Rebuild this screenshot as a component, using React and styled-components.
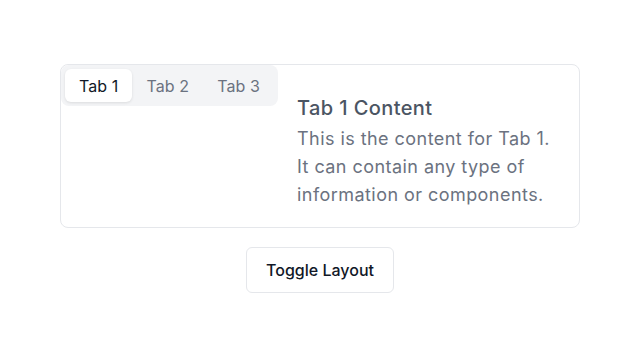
import React, { useState } from 'react'
import styled, { createGlobalStyle } from 'styled-components'

const GlobalStyle = createGlobalStyle`
    html, body {
        margin: 0;
        padding: 0;
        background: #ffffff;
        font-family: Inter, "Noto Sans", sans-serif;
    }
`
const Page = styled.div`
    display: flex;
    flex-direction: column;
    align-items: center;
    justify-content: center;
    gap: 19px;
    height: 357px;
`
const Card = styled.div`
    display: flex;
    flex-direction: ${props => (props.vertical ? 'column' : 'row')};
    align-items: flex-start;
    width: 520px;
    box-sizing: border-box;
    border: 1px solid #e5e7eb;
    border-radius: 8px;
    background: #ffffff;
`
const TabList = styled.div`
    display: flex;
    flex-shrink: 0;
    padding: 4px;
    background: #f3f4f6;
    border-radius: 8px;
`
const TabButton = styled.button`
    font-family: inherit;
    font-size: 16px;
    letter-spacing: 0.1px;
    white-space: nowrap;
    height: 33px;
    padding: 0 14px;
    border: none;
    border-radius: 6px;
    cursor: pointer;
    color: ${props => (props.active ? '#111827' : '#6b7280')};
    background: ${props => (props.active ? '#ffffff' : 'transparent')};
    box-shadow: ${props => (props.active ? '0 1px 3px rgba(0,0,0,0.1)' : 'none')};
`
const Panel = styled.div`
    padding: 29px 20px 18px 19px;
`
const Title = styled.h3`
    margin: 0 0 3px;
    font-size: 20px;
    font-weight: 500;
    letter-spacing: 0.4px;
    line-height: 28px;
    color: #4b5563;
`
const Body = styled.p`
    margin: 0;
    width: 262px;
    font-size: 18px;
    letter-spacing: 0.45px;
    line-height: 28px;
    color: #6b7280;
`
const ToggleButton = styled.button`
    font-family: inherit;
    font-size: 16px;
    font-weight: 500;
    color: #111827;
    background: #ffffff;
    width: 148px;
    height: 46px;
    border: 1px solid #e5e7eb;
    border-radius: 6px;
    cursor: pointer;
`

const tabs = [
    { id: 1, label: 'Tab 1' },
    { id: 2, label: 'Tab 2' },
    { id: 3, label: 'Tab 3' },
]

export default function App() {
    const [active, setActive] = useState(1)
    const [vertical, setVertical] = useState(false)

    return (
        <>
            <GlobalStyle />
            <Page>
                <Card vertical={vertical}>
                    <TabList>
                        {tabs.map(t => (
                            <TabButton key={t.id} active={active === t.id} onClick={() => setActive(t.id)}>
                                {t.label}
                            </TabButton>
                        ))}
                    </TabList>
                    <Panel>
                        <Title>Tab {active} Content</Title>
                        <Body>
                            This is the content for Tab {active}. It can contain any type of information or components.
                        </Body>
                    </Panel>
                </Card>
                <ToggleButton onClick={() => setVertical(v => !v)}>Toggle Layout</ToggleButton>
            </Page>
        </>
    )
}
